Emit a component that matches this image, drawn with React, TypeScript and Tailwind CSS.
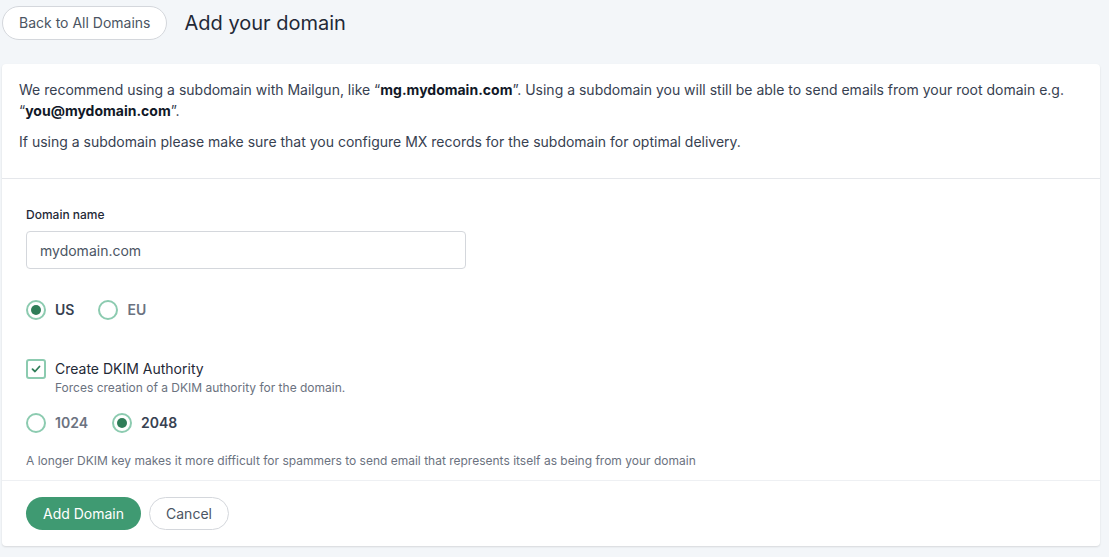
import { useState } from 'react';

function Radio({ checked, label, onClick }: { checked: boolean; label: string; onClick: () => void }) {
  return (
    <button type="button" onClick={onClick} className="flex items-center gap-[9px]">
      <span className="w-5 h-5 rounded-full border-2 border-[#8ccbb0] flex items-center justify-center bg-white">
        {checked && <span className="w-[10px] h-[10px] rounded-full bg-[#2f7d58]" />}
      </span>
      <span className={checked ? 'text-sm font-semibold text-[#374151]' : 'text-sm font-semibold text-[#6b7280]'}>
        {label}
      </span>
    </button>
  );
}

export default function App() {
  const [region, setRegion] = useState('US');
  const [dkim, setDkim] = useState(true);
  const [keySize, setKeySize] = useState('2048');
  const [domain, setDomain] = useState('');

  return (
    <div className="min-h-[557px] w-full bg-[#f3f6f9] text-[#1f2937]" style={{ fontFamily: 'Inter, "Liberation Sans", sans-serif' }}>
      {/* Header */}
      <div className="flex items-start gap-[17px] pl-[2px] pt-[6px] h-[64px]">
        <button className="h-[34px] px-4 rounded-full border border-[#d4d7dc] bg-white text-sm text-[#4b5563]">
          Back to All Domains
        </button>
        <h1 className="text-xl text-[#1f2937] leading-[34px]">Add your domain</h1>
      </div>

      {/* Card */}
      <div className="ml-[2px] mr-[9px] bg-white rounded-[4px] shadow-[0_1px_2px_rgba(0,0,0,0.12)]">
        <div className="px-[17px] pt-[15px] pb-[26px] border-b border-[#e5e7eb] text-sm text-[#374151] leading-[21px]">
          <p>
            We recommend using a subdomain with Mailgun, like “<b className="text-[#111827]">mg.mydomain.com</b>”. Using a subdomain you will still be able to send emails from your root domain e.g. “<b className="text-[#111827]">you@mydomain.com</b>”.
          </p>
          <p className="mt-[10px]">
            If using a subdomain please make sure that you configure MX records for the subdomain for optimal delivery.
          </p>
        </div>

        <div className="px-[24px] pt-[28px] pb-[11px] border-b border-[#eef0f3]">
          <label className="block text-xs font-medium text-[#1f2937]">Domain name</label>
          <input
            value={domain}
            onChange={(e) => setDomain(e.target.value)}
            placeholder="mydomain.com"
            className="mt-[8px] w-[440px] h-[38px] px-[13px] rounded-[4px] border border-[#d4d7dc] text-sm text-[#374151] placeholder:text-[#4b5563] outline-none"
          />

          <div className="flex gap-6 mt-[31px]">
            <Radio checked={region === 'US'} label="US" onClick={() => setRegion('US')} />
            <Radio checked={region === 'EU'} label="EU" onClick={() => setRegion('EU')} />
          </div>

          <div className="flex gap-[9px] mt-[38px]">
            <button
              type="button"
              onClick={() => setDkim(!dkim)}
              className="w-5 h-5 mt-[1px] rounded-[3px] border-2 border-[#8ccbb0] flex items-center justify-center bg-white"
            >
              {dkim && (
                <svg viewBox="0 0 12 12" className="w-3 h-3" fill="none" stroke="#2f7d58" strokeWidth="1.8" strokeLinecap="round" strokeLinejoin="round">
                  <path d="M2.5 6.2 L5 8.5 L9.5 3.5" />
                </svg>
              )}
            </button>
            <div>
              <div className="text-sm text-[#1f2937] leading-[22px]">Create DKIM Authority</div>
              <div className="text-xs text-[#6b7280] leading-[16px]">Forces creation of a DKIM authority for the domain.</div>
            </div>
          </div>

          <div className="flex gap-6 mt-[17px]">
            <Radio checked={keySize === '1024'} label="1024" onClick={() => setKeySize('1024')} />
            <Radio checked={keySize === '2048'} label="2048" onClick={() => setKeySize('2048')} />
          </div>

          <p className="mt-[20px] text-xs text-[#6b7280]">
            A longer DKIM key makes it more difficult for spammers to send email that represents itself as being from your domain
          </p>
        </div>

        <div className="flex gap-2 px-[24px] pt-[16px] pb-[16px]">
          <button className="h-[33px] px-[17px] rounded-full bg-[#3f9a72] text-sm text-white">Add Domain</button>
          <button className="h-[33px] px-[16px] rounded-full border border-[#d4d7dc] bg-white text-sm text-[#4b5563]">
            Cancel
          </button>
        </div>
      </div>
    </div>
  );
}
